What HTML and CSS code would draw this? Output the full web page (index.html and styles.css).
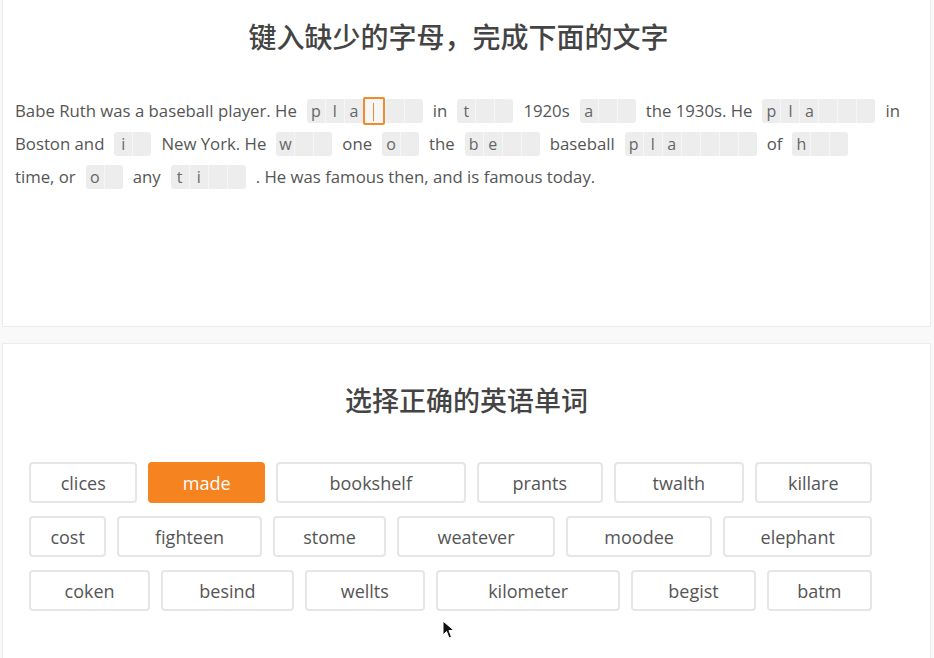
FILE: index.html
```html
<!DOCTYPE html>
<html lang="zh-CN">
<head>
    <meta charset="UTF-8">
    <title>键入缺少的字母</title>
    <link rel="stylesheet" href="styles.css">
</head>
<body>
    <div class="panel panel-top">
        <h1 class="title title-first">键入缺少的字母，完成下面的文字</h1>
        <div class="passage">
            <div class="line">
                <span>Babe Ruth was a baseball player. He</span>
                <span class="blank"><i>p</i><i>l</i><i>a</i><i class="active"><b></b></i><i></i><i></i></span>
                <span>in</span>
                <span class="blank"><i>t</i><i></i><i></i></span>
                <span>1920s</span>
                <span class="blank"><i>a</i><i></i><i></i></span>
                <span>the 1930s. He</span>
                <span class="blank"><i>p</i><i>l</i><i>a</i><i></i><i></i><i></i></span>
                <span>in</span>
            </div>
            <div class="line">
                <span>Boston and</span>
                <span class="blank"><i>i</i><i></i></span>
                <span>New York. He</span>
                <span class="blank"><i>w</i><i></i><i></i></span>
                <span>one</span>
                <span class="blank"><i>o</i><i></i></span>
                <span>the</span>
                <span class="blank"><i>b</i><i>e</i><i></i><i></i></span>
                <span>baseball</span>
                <span class="blank"><i>p</i><i>l</i><i>a</i><i></i><i></i><i></i><i></i></span>
                <span>of</span>
                <span class="blank"><i>h</i><i></i><i></i></span>
            </div>
            <div class="line">
                <span>time, or</span>
                <span class="blank"><i>o</i><i></i></span>
                <span>any</span>
                <span class="blank"><i>t</i><i>i</i><i></i><i></i></span>
                <span>. He was famous then, and is famous today.</span>
            </div>
        </div>
    </div>

    <div class="panel panel-bottom">
        <h1 class="title">选择正确的英语单词</h1>
        <div class="words">
            <div class="word-row row-1">
                <button>clices</button>
                <button class="selected">made</button>
                <button>bookshelf</button>
                <button>prants</button>
                <button>twalth</button>
                <button>killare</button>
            </div>
            <div class="word-row row-2">
                <button>cost</button>
                <button>fighteen</button>
                <button>stome</button>
                <button>weatever</button>
                <button>moodee</button>
                <button>elephant</button>
            </div>
            <div class="word-row row-3">
                <button>coken</button>
                <button>besind</button>
                <button>wellts</button>
                <button>kilometer</button>
                <button>begist</button>
                <button>batm</button>
            </div>
        </div>
        <svg class="pointer" width="14" height="20" viewBox="0 0 14 20">
            <path d="M1 1 L1 15 L4.5 11.5 L7 18 L9.5 17 L7 10.5 L12 10.5 Z" fill="#111" stroke="#fff" stroke-width="1"/>
        </svg>
    </div>
</body>
</html>
```

FILE: styles.css
```css
body {
    margin: 0;
    background: #f9f9f9;
    font-family: "Open Sans", Lato, "Noto Sans CJK SC", sans-serif;
    color: #555;
}
.panel {
    position: relative;
    background: #fff;
    border: 1px solid #ececec;
    margin: 0 3px 0 2px;
}
.panel-top {
    height: 326px;
    border-top: none;
}
.panel-bottom {
    margin-top: 16px;
    height: 320px;
}
.title {
    margin: 0;
    text-align: center;
    font-family: "Noto Sans CJK SC", sans-serif;
    font-weight: 500;
    font-size: 27px;
    line-height: 36px;
    color: #444;
}
.title-first {
    padding: 18px 16px 0 0;
    font-size: 28px;
}
.panel-bottom .title {
    padding-top: 38px;
}
.passage {
    margin-top: 40px;
    padding-left: 12px;
    font-size: 16.75px;
}
.line {
    display: flex;
    align-items: center;
    gap: 10px;
    height: 33px;
    white-space: nowrap;
}
.blank {
    display: flex;
    height: 24px;
    background: #ededed;
    border-radius: 3px;
}
.blank i {
    font-style: normal;
    width: 18px;
    line-height: 24px;
    text-align: center;
    font-size: 16px;
    color: #666;
    border-left: 1px solid #f6f6f6;
}
.blank i:first-child {
    border-left: none;
}
.blank i.active {
    position: relative;
    width: 18px;
    height: 24px;
    margin: -2px 0;
    border: 2px solid #f28a2e;
    border-radius: 2px;
    background: #f6f6f6;
}
.blank i.active b {
    position: absolute;
    left: 8px;
    top: 4px;
    width: 1px;
    height: 18px;
    background: #f28a2e;
}
.words {
    margin-top: 44px;
    padding-left: 26px;
    width: 843px;
    display: flex;
    flex-direction: column;
    gap: 13px;
}
.word-row {
    display: grid;
    gap: 11px;
    height: 41px;
}
.row-1 {
    grid-template-columns: 108fr 116fr 189fr 126fr 129fr 117fr;
}
.row-2 {
    grid-template-columns: 77fr 144fr 113fr 157fr 146fr 148fr;
}
.row-3 {
    grid-template-columns: 121fr 132fr 120fr 184fr 124fr 105fr;
}
button {
    font-family: "Open Sans", Lato, sans-serif;
    font-size: 18px;
    color: #555;
    background: #fff;
    border: 2px solid #e6e6e6;
    border-radius: 4px;
    padding: 0;
}
button.selected {
    background: #f5831f;
    border-color: #f5831f;
    color: #fff;
}
.pointer {
    position: absolute;
    left: 439px;
    top: 276px;
}
```
